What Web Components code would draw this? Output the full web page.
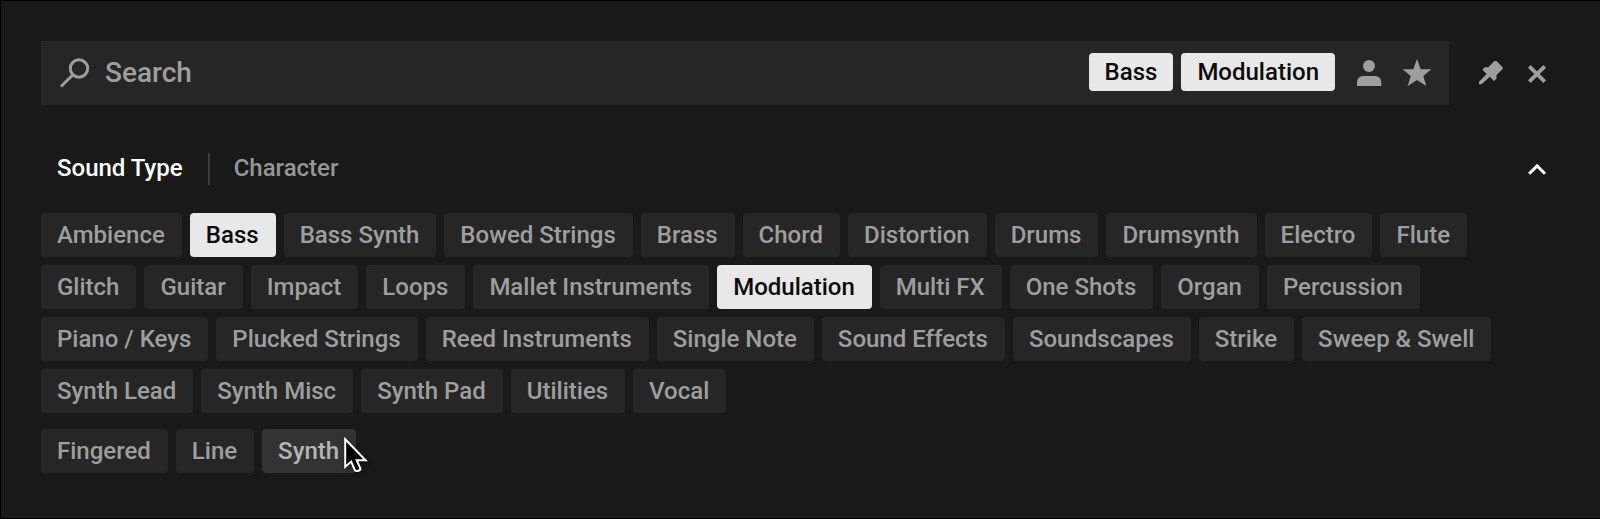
<!DOCTYPE html>
<html lang="en">
<head>
<meta charset="utf-8">
<title>Browser</title>
<style>
  body {
    margin: 0;
    min-height: 100vh;
    display: flex;
    background: #191919;
    font-family: Roboto, "Liberation Sans", sans-serif;
    font-weight: 500;
    color: #9e9e9e;
  }
</style>
</head>
<body>
<browser-panel></browser-panel>

<script>
const ICONS = {
  search: `<svg width="32" height="32" viewBox="0 0 32 32" fill="none" stroke="currentColor" stroke-width="3"><circle cx="20" cy="11.500" r="8.700"/><path d="M13.700 18 2 29.500"/></svg>`,
  user: `<svg width="32" height="32" viewBox="0 0 32 32" fill="currentColor"><circle cx="16" cy="9" r="6"/><path d="M4 29v-4a6 6 0 0 1 6-6h12.300a6 6 0 0 1 6 6v4z"/></svg>`,
  star: `<svg width="32" height="32" viewBox="0 0 32 32" fill="currentColor"><path d="m16 2 3.700 10.200h10.600l-8 6.900 3 9.900-9.300-6-9.300 6 3-9.900-8-6.900h10.600z"/></svg>`,
  pin: `<svg width="32" height="32" viewBox="0 0 32 32" fill="currentColor"><path d="M19.300 4h2.100l6.300 6.300v1.700l-6.200 6v3.700l-2.500 2.300-4.200-4.200L6.500 27.300H4v-2.600l7.700-7.700-4.400-4.300 2.500-2.500h3.500z"/></svg>`,
  close: `<svg width="32" height="32" viewBox="0 0 32 32" fill="none" stroke="currentColor" stroke-width="3.800"><path d="m8.300 9.300 15.400 15.400M23.700 9.300 8.300 24.700"/></svg>`,
  chevron: `<svg width="32" height="32" viewBox="0 0 32 32" fill="none" stroke="currentColor" stroke-width="3"><path d="m8.200 20.800 7.900-7.900 7.900 7.900"/></svg>`,
};

class IconButton extends HTMLElement {
  connectedCallback() {
    this.attachShadow({ mode: "open" }).innerHTML = `
      <style>
        :host {
          display: block;
          width: 46px;
          height: 48px;
        }
        button {
          display: grid;
          place-items: center;
          width: 100%;
          height: 100%;
          padding: 0;
          border: none;
          background: none;
          color: inherit;
          cursor: pointer;
        }
      </style>
      <button type="button" aria-label="${this.getAttribute("label")}">${ICONS[this.getAttribute("icon")]}</button>
    `;
  }
}

class TagChip extends HTMLElement {
  connectedCallback() {
    this.attachShadow({ mode: "open" }).innerHTML = `
      <style>
        :host {
          display: block;
          position: relative;
        }
        button {
          display: block;
          height: 44px;
          padding: 0 17px 0 16px;
          border: none;
          border-radius: 4px;
          background: #262626;
          color: #9e9e9e;
          font: inherit;
          font-size: 24px;
          line-height: 44px;
          white-space: nowrap;
          cursor: pointer;
        }
        :host([hot]) button,
        button:hover {
          background: #333333;
          color: #b4b4b4;
        }
        :host([selected]) button {
          background: #e8e8e8;
          color: #0c0c0c;
        }
        :host([compact]) button {
          height: 38px;
          padding: 0 16px;
          line-height: 37px;
        }
      </style>
      <button type="button" aria-pressed="${this.hasAttribute("selected")}"><slot></slot></button>
      <slot name="pointer"></slot>
    `;
  }
}

class MousePointer extends HTMLElement {
  connectedCallback() {
    this.attachShadow({ mode: "open" }).innerHTML = `
      <style>
        :host {
          position: absolute;
          top: 8px;
          right: -14px;
          pointer-events: none;
        }
        svg {
          display: block;
          filter: drop-shadow(1px 2px 2px rgba(0, 0, 0, 0.5));
        }
      </style>
      <svg width="26" height="38" viewBox="0 0 26 38">
        <path d="M1.200 2.200v27.600l6-5.200 3.600 8.400c.8 1.900 6 .8 5.600-1.500l-3.700-8.300h8.900z" fill="#000" stroke="#fff" stroke-width="2"/>
      </svg>
    `;
  }
}

class SearchField extends HTMLElement {
  connectedCallback() {
    this.attachShadow({ mode: "open" }).innerHTML = `
      <style>
        :host {
          flex: 1;
          display: flex;
          align-items: center;
          height: 64px;
          padding: 0 8px 0 18px;
          box-sizing: border-box;
          background: #262626;
        }
        label {
          display: flex;
        }
        input {
          flex: 1;
          min-width: 0;
          height: 64px;
          padding: 0 0 2px 14px;
          box-sizing: border-box;
          border: none;
          outline: none;
          background: none;
          color: #e8e8e8;
          font: inherit;
          font-size: 28px;
        }
        input::placeholder {
          color: #9e9e9e;
          opacity: 1;
        }
        .tags {
          display: flex;
          gap: 8px;
          margin: 0 10px 2px 0;
        }
        icon-button {
          width: 48px;
        }
      </style>
      <label for="query" aria-label="Search">${ICONS.search}</label>
      <input id="query" type="text" placeholder="Search">
      <div class="tags"><slot></slot></div>
      <icon-button icon="user" label="User content"></icon-button>
      <icon-button icon="star" label="Favorites"></icon-button>
    `;
  }
}

class CategoryTabs extends HTMLElement {
  connectedCallback() {
    this.attachShadow({ mode: "open" }).innerHTML = `
      <style>
        :host {
          display: flex;
          align-items: center;
          height: 48px;
        }
        button {
          height: 32px;
          padding: 0 25px 2px 16px;
          border: none;
          background: none;
          color: #969696;
          font: inherit;
          font-size: 24px;
          line-height: 30px;
          cursor: pointer;
        }
        button + button {
          padding: 0 24px 2px;
          border-left: 2px solid #3c3c3c;
        }
        button[aria-selected="true"] {
          color: #ffffff;
        }
        icon-button {
          margin-left: auto;
          color: #ffffff;
        }
      </style>
      <button type="button" role="tab" aria-selected="true">Sound Type</button>
      <button type="button" role="tab" aria-selected="false">Character</button>
      <icon-button icon="chevron" label="Collapse"></icon-button>
    `;
  }
}

class TagList extends HTMLElement {
  connectedCallback() {
    this.attachShadow({ mode: "open" }).innerHTML = `
      <style>
        :host {
          display: flex;
          flex-wrap: wrap;
          gap: 8px;
        }
      </style>
      <slot></slot>
    `;
  }
}

class BrowserPanel extends HTMLElement {
  constructor() {
    super();
    this.selected = ["Bass", "Modulation"];
    this.soundTypes = [
      "Ambience", "Bass", "Bass Synth", "Bowed Strings", "Brass", "Chord", "Distortion",
      "Drums", "Drumsynth", "Electro", "Flute", "Glitch", "Guitar", "Impact", "Loops",
      "Mallet Instruments", "Modulation", "Multi FX", "One Shots", "Organ", "Percussion",
      "Piano / Keys", "Plucked Strings", "Reed Instruments", "Single Note", "Sound Effects",
      "Soundscapes", "Strike", "Sweep &amp; Swell", "Synth Lead", "Synth Misc", "Synth Pad",
      "Utilities", "Vocal",
    ];
  }

  connectedCallback() {
    const chip = (name) =>
      `<tag-chip ${this.selected.includes(name) ? "selected" : ""}>${name}</tag-chip>`;

    this.attachShadow({ mode: "open" }).innerHTML = `
      <style>
        :host {
          flex: 1;
          box-sizing: border-box;
          padding: 40px;
          border: 1px solid #000000;
          border-right: none;
        }
        header {
          display: flex;
          align-items: center;
          margin-bottom: 40px;
        }
        search-field {
          margin-right: 19px;
        }
        category-tabs {
          margin-bottom: 20px;
        }
        tag-list + tag-list {
          margin-top: 16px;
        }
      </style>
      <header>
        <search-field>
          ${this.selected.map((name) => `<tag-chip compact selected>${name}</tag-chip>`).join("")}
        </search-field>
        <icon-button icon="pin" label="Pin"></icon-button>
        <icon-button icon="close" label="Close"></icon-button>
      </header>
      <category-tabs></category-tabs>
      <tag-list>${this.soundTypes.map(chip).join("")}</tag-list>
      <tag-list>
        <tag-chip>Fingered</tag-chip>
        <tag-chip>Line</tag-chip>
        <tag-chip hot>Synth<mouse-pointer slot="pointer"></mouse-pointer></tag-chip>
      </tag-list>
    `;
  }
}

customElements.define("icon-button", IconButton);
customElements.define("tag-chip", TagChip);
customElements.define("mouse-pointer", MousePointer);
customElements.define("search-field", SearchField);
customElements.define("category-tabs", CategoryTabs);
customElements.define("tag-list", TagList);
customElements.define("browser-panel", BrowserPanel);
</script>
</body>
</html>
